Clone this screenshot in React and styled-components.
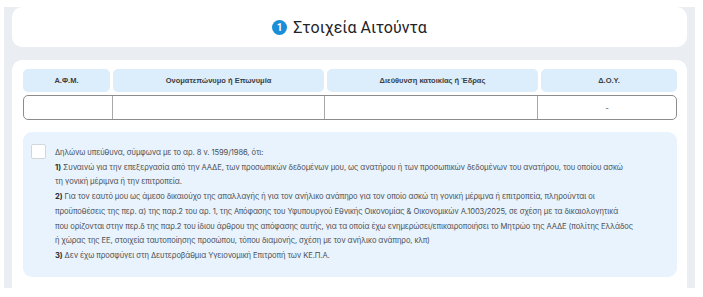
import React from "react"
import styled, { createGlobalStyle } from "styled-components"

const GlobalStyle = createGlobalStyle`
  html, body {
    margin: 0;
    padding: 0;
    background: #ffffff;
    font-family: "Inter", "Noto Sans", sans-serif;
  }
`

const Page = styled.div`
  width: 703px;
  height: 297px;
  padding-top: 7px;
  box-sizing: border-box;
`

const Backdrop = styled.div`
  margin: 0 8px 0 4px;
  height: 281px;
  padding: 0 8px;
  background: #eaedf1;
  display: flex;
  flex-direction: column;
  gap: 13px;
`

const HeaderCard = styled.div`
  flex: none;
  height: 40px;
  background: #ffffff;
  border-radius: 10px;
  display: flex;
  align-items: center;
  justify-content: center;
  gap: 6px;
  padding-top: 1px;
  box-sizing: border-box;
`

const StepBadge = styled.span`
  width: 15px;
  height: 15px;
  border-radius: 50%;
  background: #1a8ed6;
  color: #ffffff;
  font-family: "Roboto", sans-serif;
  font-size: 10px;
  font-weight: 700;
  display: flex;
  align-items: center;
  justify-content: center;
`

const Title = styled.h2`
  margin: 0;
  font-family: "Roboto", sans-serif;
  font-weight: 400;
  font-size: 16px;
  color: #1f2328;
`

const Card = styled.div`
  flex: none;
  height: 237px;
  background: #ffffff;
  border-radius: 10px 10px 0 0;
  padding: 9px 10px 0 11px;
  display: flex;
  flex-direction: column;
  gap: 12px;
`

const Grid = styled.div`
  display: grid;
  grid-template-columns: 87px 211px 211px 1fr;
  column-gap: 3px;
  row-gap: 3px;
`

const HeadCell = styled.div`
  height: 23px;
  background: #dcedfc;
  border-radius: 5px;
  display: flex;
  align-items: center;
  justify-content: center;
  font-family: "Liberation Sans", sans-serif;
  font-size: 7.5px;
  font-weight: 700;
  color: #3a3f45;
`

const Row = styled.div`
  grid-column: 1 / -1;
  display: grid;
  grid-template-columns: 88px 212px 213px 1fr;
  height: 25px;
  border: 1px solid #8c8c8c;
  border-radius: 5px;
  box-sizing: border-box;
`

const DataCell = styled.div`
  border-left: ${(p) => (p.first ? "none" : "1px solid #a8a8a8")};
  display: flex;
  align-items: center;
  justify-content: center;
  font-size: 8px;
  color: #555;
`

const Declaration = styled.div`
  flex: none;
  height: 145px;
  background: #e9f3fd;
  border-radius: 9px;
  padding: 12px 8px 0 8px;
  display: flex;
  gap: 9px;
  box-sizing: border-box;
`

const Checkbox = styled.span`
  flex: none;
  width: 13px;
  height: 13px;
  background: #ffffff;
  border: 1px solid #d2d7dc;
  border-radius: 2px;
`

const DeclText = styled.p`
  margin: 2px 0 0;
  font-family: "Inter", sans-serif;
  font-size: 7.6px;
  line-height: 14.7px;
  color: #4a4e53;
  letter-spacing: -0.1px;

  b {
    font-weight: 700;
    color: #2a2d31;
  }
`

const columns = ["Α.Φ.Μ.", "Ονοματεπώνυμο ή Επωνυμία", "Διεύθυνση κατοικίας ή Έδρας", "Δ.Ο.Υ."]

export default function App() {
  return (
    <Page>
      <GlobalStyle />
      <Backdrop>
        <HeaderCard>
          <StepBadge>1</StepBadge>
          <Title>Στοιχεία Αιτούντα</Title>
        </HeaderCard>
        <Card>
          <Grid>
            {columns.map((c) => (
              <HeadCell key={c}>{c}</HeadCell>
            ))}
            <Row>
              <DataCell first />
              <DataCell />
              <DataCell />
              <DataCell>-</DataCell>
            </Row>
          </Grid>
          <Declaration>
            <Checkbox />
            <DeclText>
              Δηλώνω υπεύθυνα, σύμφωνα με το αρ. 8 ν. 1599/1986, ότι:
              <br />
              <b>1)</b> Συναινώ για την επεξεργασία από την ΑΑΔΕ, των προσωπικών δεδομένων μου, ως ανατήρου ή των προσωπικών δεδομένων του ανατήρου, του οποίου ασκώ
              <br />
              τη γονική μέριμνα ή την επιτροπεία.
              <br />
              <b>2)</b> Για τον εαυτό μου ως άμεσο δικαιούχο της απαλλαγής ή για τον ανήλικο ανάπηρο για τον οποίο ασκώ τη γονική μέριμνα ή επιτροπεία, πληρούνται οι
              <br />
              προϋποθέσεις της περ. α) της παρ.2 του αρ. 1, της Απόφασης του Υφυπουργού Εθνικής Οικονομίας &amp; Οικονομικών Α.1003/2025, σε σχέση με τα δικαιολογητικά
              <br />
              που ορίζονται στην περ.δ της παρ.2 του ίδιου άρθρου της απόφασης αυτής, για τα οποία έχω ενημερώσει/επικαιροποιήσει το Μητρώο της ΑΑΔΕ (πολίτης Ελλάδος
              <br />
              ή χώρας της ΕΕ, στοιχεία ταυτοποίησης προσώπου, τόπου διαμονής, σχέση με τον ανήλικο ανάπηρο, κλπ)
              <br />
              <b>3)</b> Δεν έχω προσφύγει στη Δευτεροβάθμια Υγειονομική Επιτροπή των ΚΕ.Π.Α.
            </DeclText>
          </Declaration>
        </Card>
      </Backdrop>
    </Page>
  )
}
